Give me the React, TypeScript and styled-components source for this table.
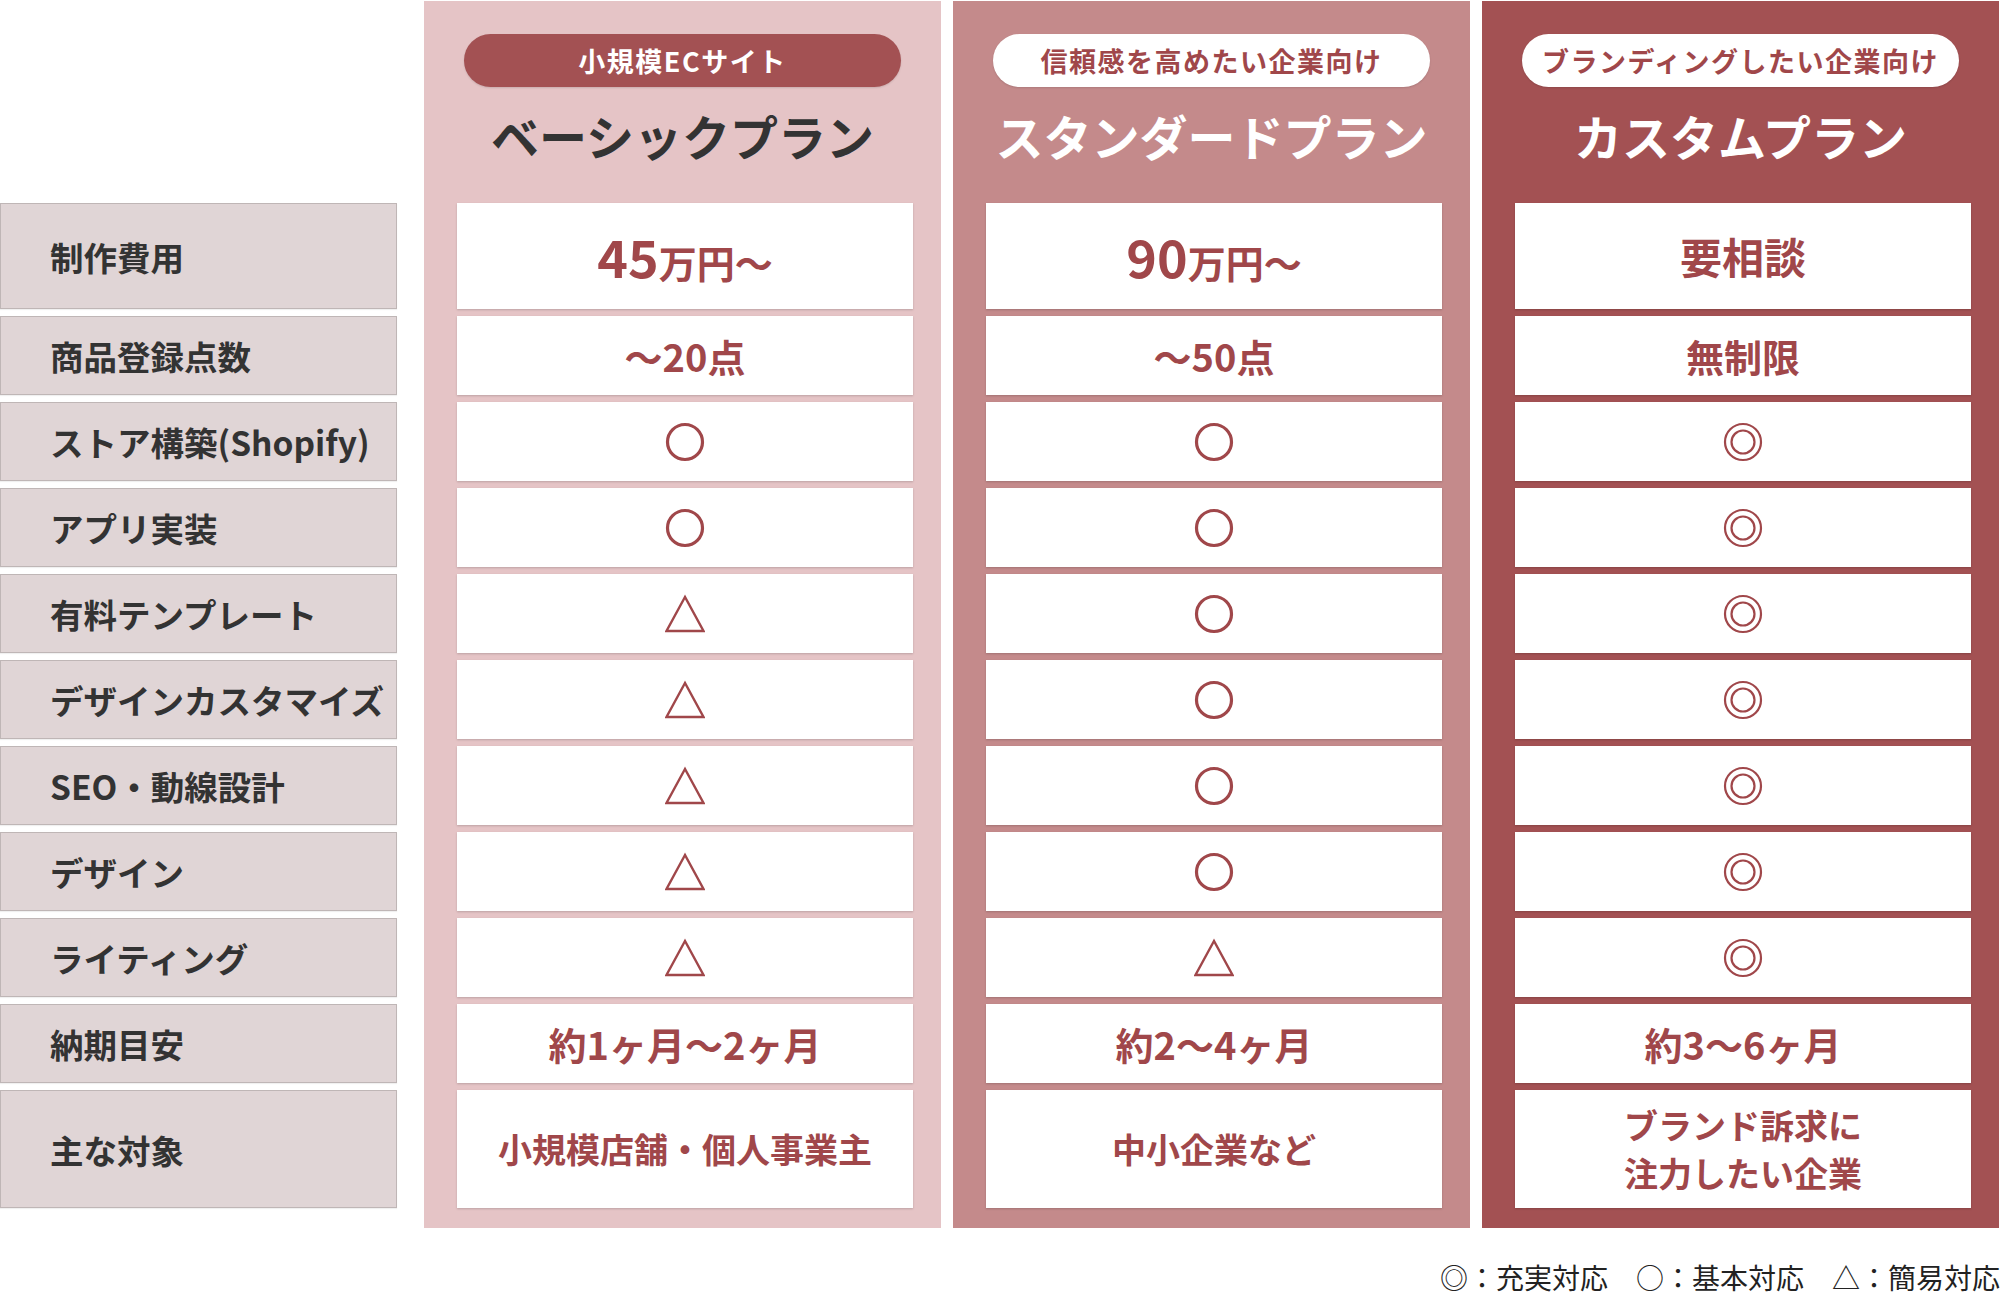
import styled, { createGlobalStyle } from 'styled-components';

const GlobalStyle = createGlobalStyle`
  body {
    margin: 0;
    background: #fff;
    font-family: 'Noto Sans CJK JP', 'Noto Sans', sans-serif;
  }
`;

const RED = '#a0474a';
const HEAD_H = 202;
const ROW_GAP = 7;

type Mark = 'circle' | 'double' | 'tri';
type Cell =
  | { kind: 'price'; num: string; unit: string }
  | { kind: 'text'; text: string; size: number }
  | { kind: 'mark'; mark: Mark };

const rows = [
  { label: '制作費用', h: 106 },
  { label: '商品登録点数', h: 79 },
  { label: 'ストア構築(Shopify)', h: 79 },
  { label: 'アプリ実装', h: 79 },
  { label: '有料テンプレート', h: 79 },
  { label: 'デザインカスタマイズ', h: 79 },
  { label: 'SEO・動線設計', h: 79 },
  { label: 'デザイン', h: 79 },
  { label: 'ライティング', h: 79 },
  { label: '納期目安', h: 79 },
  { label: '主な対象', h: 118 },
];

const t = (text: string, size = 38): Cell => ({ kind: 'text', text, size });
const m = (mark: Mark): Cell => ({ kind: 'mark', mark });

const plans = [
  {
    tag: '小規模ECサイト',
    title: 'ベーシックプラン',
    bg: '#e5c4c6',
    tagBg: '#a35153',
    tagColor: '#fff',
    titleColor: '#333',
    cells: [
      { kind: 'price', num: '45', unit: '万円〜' } as Cell,
      t('〜20点'),
      m('circle'),
      m('circle'),
      m('tri'),
      m('tri'),
      m('tri'),
      m('tri'),
      m('tri'),
      t('約1ヶ月〜2ヶ月'),
      t('小規模店舗・個人事業主', 34),
    ],
  },
  {
    tag: '信頼感を高めたい企業向け',
    title: 'スタンダードプラン',
    bg: '#c48a8b',
    tagBg: '#fff',
    tagColor: RED,
    titleColor: '#fff',
    cells: [
      { kind: 'price', num: '90', unit: '万円〜' } as Cell,
      t('〜50点'),
      m('circle'),
      m('circle'),
      m('circle'),
      m('circle'),
      m('circle'),
      m('circle'),
      m('tri'),
      t('約2〜4ヶ月'),
      t('中小企業など', 34),
    ],
  },
  {
    tag: 'ブランディングしたい企業向け',
    title: 'カスタムプラン',
    bg: '#a35153',
    tagBg: '#fff',
    tagColor: RED,
    titleColor: '#fff',
    cells: [
      t('要相談', 42),
      t('無制限'),
      m('double'),
      m('double'),
      m('double'),
      m('double'),
      m('double'),
      m('double'),
      m('double'),
      t('約3〜6ヶ月'),
      t('ブランド訴求に\n注力したい企業', 34),
    ],
  },
];

const Page = styled.div`
  width: 2000px;
  padding-top: 1px;
`;

const Table = styled.div`
  display: flex;
  align-items: stretch;
`;

const LabelColumn = styled.div`
  width: 397px;
  margin-right: 27px;
  display: flex;
  flex-direction: column;
  gap: ${ROW_GAP}px;
  padding-top: ${HEAD_H}px;
`;

const LabelBox = styled.div<{ $h: number }>`
  height: ${(p) => p.$h}px;
  box-sizing: border-box;
  display: flex;
  align-items: center;
  padding-left: 49px;
  background: #e0d5d6;
  border: 1px solid #bfb6b6;
  box-shadow: 0 1px 1px rgba(0, 0, 0, 0.06);
  color: #333;
  font-size: 33.5px;
  font-weight: 700;
  white-space: nowrap;
`;

const PlanColumn = styled.div<{ $bg: string }>`
  width: 517px;
  background: ${(p) => p.$bg};
  padding: 0 28px 20px 33px;
  box-sizing: border-box;
  display: flex;
  flex-direction: column;
  gap: ${ROW_GAP}px;

  & + & {
    margin-left: 12px;
  }
`;

const Head = styled.div`
  height: ${HEAD_H - ROW_GAP}px;
  display: flex;
  flex-direction: column;
  align-items: center;
  margin: 0 -28px 0 -33px;
`;

const Tag = styled.div<{ $bg: string; $color: string }>`
  margin-top: 33px;
  width: 437px;
  height: 53px;
  border-radius: 27px;
  background: ${(p) => p.$bg};
  color: ${(p) => p.$color};
  display: flex;
  align-items: center;
  justify-content: center;
  font-size: 27px;
  font-weight: 700;
  letter-spacing: 1.5px;
  white-space: nowrap;
  box-shadow: 0 1px 2px rgba(0, 0, 0, 0.12);
`;

const Title = styled.div<{ $color: string }>`
  margin-top: 12px;
  line-height: 72px;
  font-size: 48px;
  font-weight: 700;
  color: ${(p) => p.$color};
  white-space: nowrap;
`;

const CellBox = styled.div<{ $h: number }>`
  height: ${(p) => p.$h}px;
  background: #fff;
  display: flex;
  align-items: center;
  justify-content: center;
  text-align: center;
  color: ${RED};
  font-weight: 700;
  box-shadow: 0 1px 2px rgba(0, 0, 0, 0.18);
`;

const CellText = styled.div<{ $size: number }>`
  font-size: ${(p) => p.$size}px;
  line-height: 1.4;
  white-space: pre-line;
`;

const Price = styled.div`
  display: flex;
  align-items: baseline;
  font-size: 38px;
  line-height: 1;

  b {
    font-size: 52px;
    font-weight: 700;
  }
`;

const Legend = styled.div`
  margin-top: 30px;
  text-align: right;
  font-size: 28px;
  line-height: 39px;
  color: #222;
  white-space: pre;
`;

const MarkIcon = ({ mark }: { mark: Mark }) => (
  <svg width="40" height="40" viewBox="0 0 40 40" fill="none" stroke={RED}>
    {mark === 'circle' && <circle cx="20" cy="20" r="17.5" strokeWidth="3.2" />}
    {mark === 'double' && (
      <>
        <circle cx="20" cy="20" r="18" strokeWidth="2.2" />
        <circle cx="20" cy="20" r="11.5" strokeWidth="2.2" />
      </>
    )}
    {mark === 'tri' && (
      <polygon points="20,3 1.5,37 38.5,37" strokeWidth="2.4" strokeLinejoin="miter" />
    )}
  </svg>
);

const renderCell = (c: Cell) => {
  if (c.kind === 'mark') return <MarkIcon mark={c.mark} />;
  if (c.kind === 'price')
    return (
      <Price>
        <b>{c.num}</b>
        {c.unit}
      </Price>
    );
  return <CellText $size={c.size}>{c.text}</CellText>;
};

export default function App() {
  return (
    <Page>
      <GlobalStyle />
      <Table>
        <LabelColumn>
          {rows.map((r) => (
            <LabelBox key={r.label} $h={r.h}>
              {r.label}
            </LabelBox>
          ))}
        </LabelColumn>

        {plans.map((p) => (
          <PlanColumn key={p.title} $bg={p.bg}>
            <Head>
              <Tag $bg={p.tagBg} $color={p.tagColor}>
                {p.tag}
              </Tag>
              <Title $color={p.titleColor}>{p.title}</Title>
            </Head>
            {p.cells.map((c, i) => (
              <CellBox key={i} $h={rows[i].h}>
                {renderCell(c)}
              </CellBox>
            ))}
          </PlanColumn>
        ))}
      </Table>
      <Legend>{'◎：充実対応　○：基本対応　△：簡易対応'}</Legend>
    </Page>
  );
}
